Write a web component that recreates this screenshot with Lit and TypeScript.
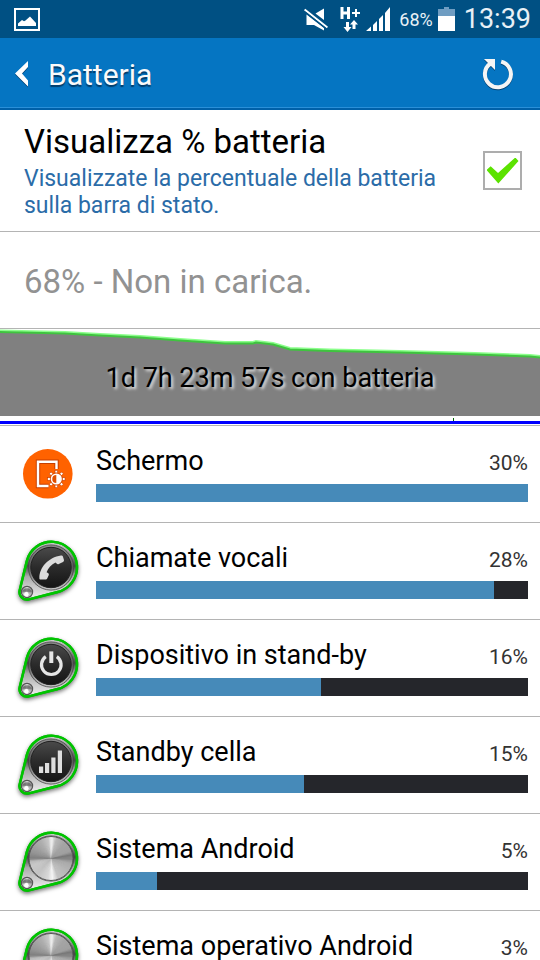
import { LitElement, html, svg, css } from "lit";
import { customElement, property } from "lit/decorators.js";

type IconName = "screen" | "call" | "power" | "signal" | "system";

interface Usage {
  name: string;
  percent: number;
  fill: number;
  icon: IconName;
}

const USAGE: Usage[] = [
  { name: "Schermo", percent: 30, fill: 100, icon: "screen" },
  { name: "Chiamate vocali", percent: 28, fill: 92.2, icon: "call" },
  { name: "Dispositivo in stand-by", percent: 16, fill: 52.1, icon: "power" },
  { name: "Standby cella", percent: 15, fill: 48.2, icon: "signal" },
  { name: "Sistema Android", percent: 5, fill: 14.1, icon: "system" },
  { name: "Sistema operativo Android", percent: 3, fill: 9, icon: "system" },
];

/* Brushed metal: thin wedges whose grey follows the angle, clockwise from the right. */
const STOPS: [number, number][] = [
  [0, 135], [15, 170], [45, 185], [70, 195], [86, 245], [100, 215], [130, 195],
  [160, 200], [172, 185], [180, 125], [200, 150], [240, 175],
  [262, 200], [272, 245], [284, 185], [310, 165], [340, 160], [350, 120], [360, 135],
];
function greyAt(a: number): number {
  for (let i = 1; i < STOPS.length; i++) {
    const [a0, g0] = STOPS[i - 1];
    const [a1, g1] = STOPS[i];
    if (a <= a1) return Math.round(g0 + ((g1 - g0) * (a - a0)) / (a1 - a0));
  }
  return 135;
}
function brushed(cx: number, cy: number, r: number) {
  const step = 4;
  const out = [];
  for (let a = 0; a < 360; a += step) {
    const p = (d: number) => {
      const t = (d * Math.PI) / 180;
      return `${(cx + r * Math.cos(t)).toFixed(2)} ${(cy + r * Math.sin(t)).toFixed(2)}`;
    };
    const g = greyAt(a + step / 2);
    out.push(svg`<path d="M${cx} ${cy}L${p(a)}A${r} ${r} 0 0 1 ${p(a + step + 3)}Z" fill="rgb(${g},${g},${g})"/>`);
  }
  return out;
}

const OUTLINE = "M10.8 24.1A25.5 25.5 0 1 1 41.7 55L12.8 62.3A7.5 7.5 0 0 1 3.7 53.2Z";

@customElement("usage-icon")
export class UsageIcon extends LitElement {
  @property() name: IconName = "system";

  static styles = css`
    :host { display: block; width: 64px; height: 68px; }
    svg { display: block; overflow: visible; }
    .shadow { filter: drop-shadow(0 2px 2px rgba(0, 0, 0, 0.55)); }
  `;

  private glyph() {
    switch (this.name) {
      case "call":
        return svg`<path fill="#dcdcdc" d="M23.4 41.4C23.2 30.5 32.5 20.4 45 18.6C46 18.4 46.6 18.7 46.9 19.6L47.9 22.8C48.2 23.8 47.8 24.5 47 24.9L42.8 27C42 27.4 41.2 27.2 40.6 26.6L39.5 25.5C35.5 27.5 32.1 31.2 30.6 35.2L32 36C32.7 36.5 33 37.1 32.8 37.9L31.2 41.4C30.8 42.2 30.3 42.5 29.5 42.5L24.8 42.5C23.8 42.5 23.4 42.200 23.400 41.400Z"/>`;
      case "power":
        return svg`<path d="M29.8 22.6A9.8 9.8 0 1 0 40.8 22.6" fill="none" stroke="#e6e6e6" stroke-width="3.2"/>
          <path d="M35.3 17.4V29" stroke="#e6e6e6" stroke-width="4"/>`;
      case "signal":
        return svg`<path fill="#dedede" d="M23 35.500h4.200V42H23zM29 32h4.200v10H29zM35.300 26.500h4.200V42h-4.200zM41.800 19.500H46V42h-4.200z"/>`;
      default:
        return null;
    }
  }

  render() {
    if (this.name === "screen") {
      return html`<svg width="64" height="68" viewBox="0 0 64 68" aria-hidden="true">
        <circle cx="31.8" cy="33.8" r="24.8" fill="#ff6200"/>
        <path d="M32.5 46H22V21.8H40.5V29" fill="none" stroke="#c63f00" stroke-width="4.4"/>
        <path d="M32.5 46H22V21.8H40.5V29" fill="none" stroke="#fff" stroke-width="2.4"/>
        <circle cx="40.3" cy="39" r="6.6" fill="#e04f00"/>
        <g fill="#fff" stroke="#c63f00" stroke-width=".6">
          ${[0, 45, 90, 135, 180, 225, 270, 315].map(
            (a) => svg`<rect x="39" y="30.3" width="2.6" height="2.6" transform="rotate(${a} 40.3 39)"/>`,
          )}
        </g>
        <circle cx="40.3" cy="39" r="4.8" fill="none" stroke="#fff" stroke-width="1.5"/>
        <path d="M40.3 34.2a4.8 4.8 0 0 1 0 9.600z" fill="#fff"/>
      </svg>`;
    }
    const plain = this.name === "system";
    return html`<svg width="64" height="68" viewBox="0 0 64 68" aria-hidden="true">
      <defs>
        <linearGradient id="rim" x1="0" y1="0" x2="0" y2="1">
          <stop offset="0" stop-color="#d2d2d2"/><stop offset=".2" stop-color="#999"/>
          <stop offset=".42" stop-color="#444"/><stop offset=".6" stop-color="#aaa"/>
          <stop offset="1" stop-color="#f2f2f2"/>
        </linearGradient>
        <linearGradient id="dark" x1="0" y1="0" x2="0" y2="1">
          <stop offset="0" stop-color="#4a4a4a"/><stop offset=".5" stop-color="#2b2b2b"/>
          <stop offset="1" stop-color="#141414"/>
        </linearGradient>
        <linearGradient id="ring" x1="0" y1="0" x2="0" y2="1">
          <stop offset="0" stop-color="#8c8c8c"/><stop offset=".5" stop-color="#5a5a5a"/>
          <stop offset="1" stop-color="#c8c8c8"/>
        </linearGradient>
      </defs>
      <path class="shadow" d=${OUTLINE} fill="url(#rim)" stroke="#0b0" stroke-width="2.4" stroke-linejoin="round"/>
      <circle cx="35" cy="30.500" r="22.6" fill="url(#ring)" stroke="#444" stroke-width=".8"/>
      ${plain
        ? svg`<g>${brushed(35, 30.5, 22)}</g><circle cx="35" cy="30.5" r="22" fill="none" stroke="#555" stroke-width="1"/>`
        : svg`<circle cx="35" cy="30.5" r="20.2" fill="url(#dark)" stroke="#222" stroke-width="1"/>`}
      ${this.glyph()}
      ${brushed(11, 55, 5.6)}
      <circle cx="11" cy="55" r="5.6" fill="none" stroke="#555" stroke-width="1.2"/>
      <path d="M6.5 54.5A4.8 4.8 0 0 1 15.5 54.5Z" fill="#555" opacity=".6"/>
      <circle cx="10.4" cy="57.2" r="2.2" fill="#fff"/>
      <path d=${OUTLINE} fill="none" stroke="#00c400" stroke-width="2.4" stroke-linejoin="round"/>
    </svg>`;
  }
}

@customElement("app-root")
export class AppRoot extends LitElement {
  static styles = css`
    * { box-sizing: border-box; }
    :host {
      display: flex; flex-direction: column; height: 100vh; overflow: hidden;
      background: #fff; color: #000;
      font-family: Roboto, "Liberation Sans", sans-serif;
    }
    svg { display: block; flex: none; }
    .status {
      flex: none; display: flex; align-items: center; height: 38px;
      padding: 0 9px 0 14px; background: #005083; color: #e8f0f6;
    }
    .spacer { flex: 1; }
    .level { margin-left: 9px; font-size: 18px; line-height: 20px; padding-top: 2px; }
    .cell { margin-left: 5px; }
    .mobile { margin-left: 12px; }
    .bars { margin-left: 5px; }
    .clock { margin-left: 9px; font-size: 27px; line-height: 36px; }
    .bar {
      flex: none; display: flex; align-items: center; height: 72px;
      padding: 2px 25px 0 14px; background: #0575c2;
      border-bottom: 2px solid #0060a8; box-shadow: inset 0 -1px #2a8fd8;
    }
    .title {
      margin: 0; flex: 1; padding-top: 2px; color: #fafafa;
      font-size: 30px; line-height: 40px; font-weight: 400;
      text-shadow: 0 2px 1px rgba(0, 30, 60, 0.65);
    }
    .icon-button { padding: 0; border: 0; background: none; color: #f5f5f5; }
    .back { margin-right: 18px; }
    .icon-button svg { filter: drop-shadow(0 1px 0 rgba(0, 30, 60, 0.6)); }
    main { flex: 1; min-height: 0; overflow-y: auto; scrollbar-width: none; }
    .option {
      display: flex; align-items: center; gap: 24px; height: 122px;
      padding: 0 18px 0 24px; border-bottom: 1px solid #b4b4b4;
    }
    .option-text { flex: 1; display: grid; gap: 4px; }
    .option-title { font-size: 33px; line-height: 38px; }
    .option-note { color: #2b6ca8; font-size: 23px; line-height: 27px; }
    .check {
      appearance: none; flex: none; display: grid; place-items: center;
      width: 39px; height: 39px; margin: 0; border: 2px solid #adadad; background: #fff;
    }
    .check:checked::before {
      content: ""; width: 32px; height: 26px; background: #5be200;
      clip-path: polygon(0 48%, 13% 34%, 36% 60%, 90% 0, 100% 13%, 37% 100%);
    }
    .state {
      display: flex; align-items: center; margin: 0; height: 97px; padding: 4px 24px 0;
      border-bottom: 1px solid #b4b4b4; color: #929292; font-size: 33px; line-height: 40px;
    }
    .history { display: grid; margin: 0; height: 97px; border-bottom: 1px solid #b4b4b4; }
    .history > * { grid-area: 1 / 1; }
    .history svg { width: 100%; height: 96px; }
    .elapsed {
      align-self: center; padding-top: 2px; text-align: center; font-size: 27px; line-height: 36px;
      text-shadow: 2px 2px 3px #e8e8e8; z-index: 1;
    }
    .list { margin: 0; padding: 0; list-style: none; }
    .row {
      display: flex; gap: 16px; height: 97px; padding: 14px 12px 0 16px;
      border-bottom: 1px solid #b4b4b4;
    }
    .usage { flex: 1; min-width: 0; padding-top: 3px; }
    .caption { display: flex; align-items: baseline; justify-content: space-between; height: 41px; line-height: 36px; }
    .name { font-size: 27px; }
    .percent { font-size: 21px; color: #333; }
    .track { height: 18px; background: #25262b; }
    .fill { height: 100%; background: #468ab9; }
  `;

  render() {
    return html`
      <div class="status">
        <svg width="26" height="23" viewBox="0 0 26 23" aria-hidden="true">
          <rect x="1" y="1" width="24" height="21" fill="none" stroke="#fff" stroke-width="2"/>
          <path fill="#fff" d="M4 18v-2.5l4-3.5 2 1.2 1.5-.7 4.5-4 6 6.500v3z"/>
        </svg>
        <span class="spacer"></span>
        <svg width="24" height="23" viewBox="0 0 24 23" aria-hidden="true">
          <path fill="#fff" d="M11.500 5.500L20 .5V12z"/>
          <path fill="#fff" d="M2.500 6.500V17h7.500L20 22.500V20z"/>
          <path d="M1.500 0L24 17" stroke="#005083" stroke-width="1.600"/>
          <path d="M.6 1.500L23.400 19.500" stroke="#fff" stroke-width="2"/>
          <path d="M1 4L22.500 21" stroke="#005083" stroke-width="1.200"/>
        </svg>
        <svg class="mobile" width="21" height="25" viewBox="0 0 21 25" aria-hidden="true">
          <path fill="none" stroke="#fff" stroke-width="3" d="M2 0v12M8.500 0v12M2 6h6.500"/>
          <path fill="none" stroke="#fff" stroke-width="2" d="M12 6h8M16 2v8"/>
          <path fill="#fff" d="M6 15h3v5h2.500L7.500 25 3.500 20H6zM12.500 22h3v-4.500H18L14 13l-4 4.500h2.500z"/>
        </svg>
        <svg class="bars" width="24" height="24" viewBox="0 0 24 24" aria-hidden="true">
          <path fill="#fff" d="M0 24L5 19.500V24zM7 24v-6l4-4v10zM13 24V12l4-4v16zM19 24V6l5-6v24z"/>
        </svg>
        <span class="level">68%</span>
        <svg class="cell" width="17" height="24" viewBox="0 0 17 24" aria-hidden="true">
          <path fill="#6f9dc2" d="M6 0h5v2h6v7H0V2h6z"/><path fill="#fff" d="M0 9h17v15H0z"/>
        </svg>
        <span class="clock">13:39</span>
      </div>
      <header class="bar">
        <button class="icon-button back" aria-label="Indietro">
          <svg width="16" height="26" viewBox="0 0 16 26"><path fill="#fff" d="M14 0v6L8 12.500l6 7v6L1 12.500z"/></svg>
        </button>
        <h1 class="title">Batteria</h1>
        <button class="icon-button" aria-label="Aggiorna">
          <svg width="34" height="34" viewBox="0 0 34 34">
            <path d="M20.200 4.600A13 13 0 1 1 9.500 6.500" fill="none" stroke="currentColor" stroke-width="4"/>
            <path d="M3 2h11v11z" fill="currentColor"/>
          </svg>
        </button>
      </header>
      <main>
        <label class="option">
          <span class="option-text">
            <span class="option-title">Visualizza % batteria</span>
            <span class="option-note">Visualizzate la percentuale della batteria sulla barra di stato.</span>
          </span>
          <input class="check" type="checkbox" checked />
        </label>
        <p class="state">68% - Non in carica.</p>
        <figure class="history">
          <svg viewBox="0 0 540 96" preserveAspectRatio="none" aria-hidden="true">
            <path fill="#808080" d="M0 3L65 4 100 6 140 8 180 11 225 14 253 14 256 13 273 15 290 20 330 21 400 23 475 25 530 27 540 28V87H0z"/>
            <path fill="none" stroke="#8cff8c" stroke-width="2" d="M0 1.500L65 3 100 5 140 7 180 10 225 13 253 13 256 12 273 14 290 19 330 20.500 400 22 475 24 530 26 540 27"/>
            <path fill="none" stroke="#3fc43f" stroke-width="2" d="M0 3L65 4.500 100 6.500 140 8.500 180 11.500 225 14.500 253 14.500 256 13.500 273 15.500 290 20.500 330 22 400 23.500 475 25.500 530 27.500 540 28.500"/>
            <path fill="#006400" d="M453 89h1v3h-1z"/>
            <path fill="#00f" d="M0 92h540v3H0z"/>
          </svg>
          <figcaption class="elapsed">1d 7h 23m 57s con batteria</figcaption>
        </figure>
        <ul class="list">
          ${USAGE.map(
            (u) => html`<li class="row">
              <usage-icon .name=${u.icon}></usage-icon>
              <div class="usage">
                <div class="caption"><span class="name">${u.name}</span><span class="percent">${u.percent}%</span></div>
                <div class="track"><div class="fill" style="width:${u.fill}%"></div></div>
              </div>
            </li>`,
          )}
        </ul>
      </main>
    `;
  }
}
